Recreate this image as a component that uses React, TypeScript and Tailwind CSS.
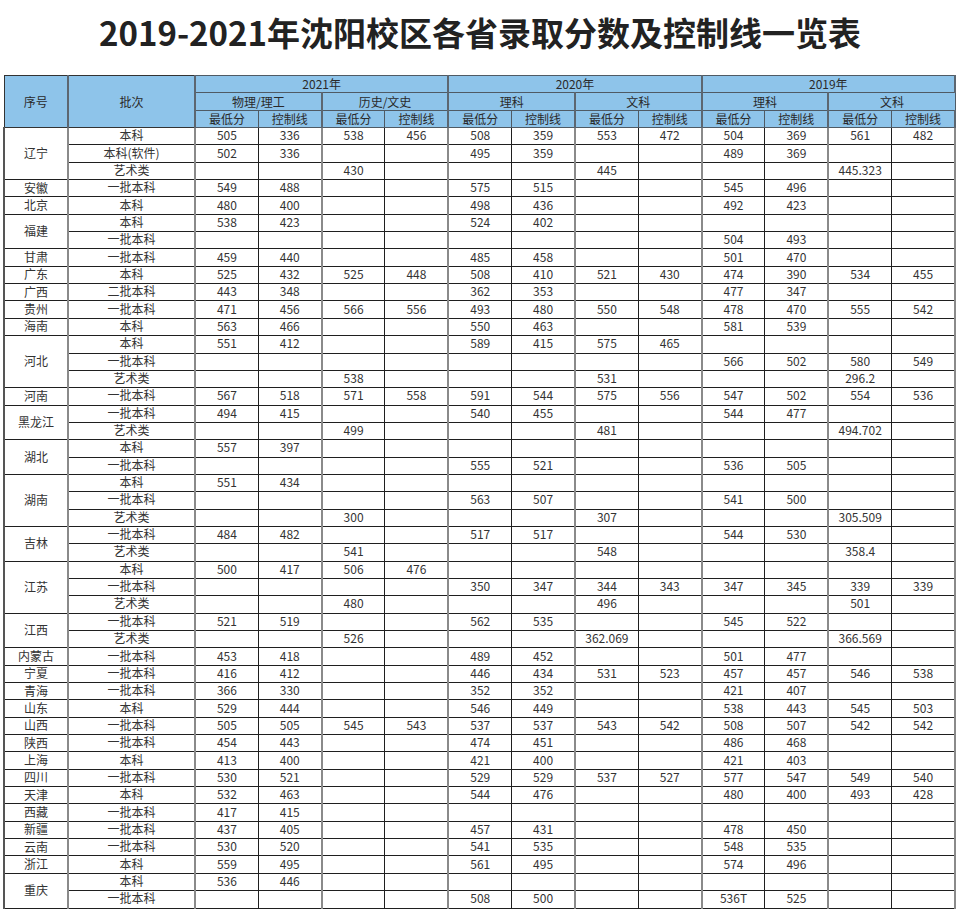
type Row = { batch: string; vals: string };
type Group = { prov: string; rows: Row[] };

const groups: Group[] = [
  {
    prov: "辽宁",
    rows: [
      { batch: "本科", vals: "505 336 538 456 508 359 553 472 504 369 561 482" },
      { batch: "本科(软件)", vals: "502 336 _ _ 495 359 _ _ 489 369 _ _" },
      { batch: "艺术类", vals: "_ _ 430 _ _ _ 445 _ _ _ 445.323 _" },
    ],
  },
  { prov: "安徽", rows: [{ batch: "一批本科", vals: "549 488 _ _ 575 515 _ _ 545 496 _ _" }] },
  { prov: "北京", rows: [{ batch: "本科", vals: "480 400 _ _ 498 436 _ _ 492 423 _ _" }] },
  {
    prov: "福建",
    rows: [
      { batch: "本科", vals: "538 423 _ _ 524 402 _ _ _ _ _ _" },
      { batch: "一批本科", vals: "_ _ _ _ _ _ _ _ 504 493 _ _" },
    ],
  },
  { prov: "甘肃", rows: [{ batch: "一批本科", vals: "459 440 _ _ 485 458 _ _ 501 470 _ _" }] },
  { prov: "广东", rows: [{ batch: "本科", vals: "525 432 525 448 508 410 521 430 474 390 534 455" }] },
  { prov: "广西", rows: [{ batch: "二批本科", vals: "443 348 _ _ 362 353 _ _ 477 347 _ _" }] },
  { prov: "贵州", rows: [{ batch: "一批本科", vals: "471 456 566 556 493 480 550 548 478 470 555 542" }] },
  { prov: "海南", rows: [{ batch: "本科", vals: "563 466 _ _ 550 463 _ _ 581 539 _ _" }] },
  {
    prov: "河北",
    rows: [
      { batch: "本科", vals: "551 412 _ _ 589 415 575 465 _ _ _ _" },
      { batch: "一批本科", vals: "_ _ _ _ _ _ _ _ 566 502 580 549" },
      { batch: "艺术类", vals: "_ _ 538 _ _ _ 531 _ _ _ 296.2 _" },
    ],
  },
  { prov: "河南", rows: [{ batch: "一批本科", vals: "567 518 571 558 591 544 575 556 547 502 554 536" }] },
  {
    prov: "黑龙江",
    rows: [
      { batch: "一批本科", vals: "494 415 _ _ 540 455 _ _ 544 477 _ _" },
      { batch: "艺术类", vals: "_ _ 499 _ _ _ 481 _ _ _ 494.702 _" },
    ],
  },
  {
    prov: "湖北",
    rows: [
      { batch: "本科", vals: "557 397 _ _ _ _ _ _ _ _ _ _" },
      { batch: "一批本科", vals: "_ _ _ _ 555 521 _ _ 536 505 _ _" },
    ],
  },
  {
    prov: "湖南",
    rows: [
      { batch: "本科", vals: "551 434 _ _ _ _ _ _ _ _ _ _" },
      { batch: "一批本科", vals: "_ _ _ _ 563 507 _ _ 541 500 _ _" },
      { batch: "艺术类", vals: "_ _ 300 _ _ _ 307 _ _ _ 305.509 _" },
    ],
  },
  {
    prov: "吉林",
    rows: [
      { batch: "一批本科", vals: "484 482 _ _ 517 517 _ _ 544 530 _ _" },
      { batch: "艺术类", vals: "_ _ 541 _ _ _ 548 _ _ _ 358.4 _" },
    ],
  },
  {
    prov: "江苏",
    rows: [
      { batch: "本科", vals: "500 417 506 476 _ _ _ _ _ _ _ _" },
      { batch: "一批本科", vals: "_ _ _ _ 350 347 344 343 347 345 339 339" },
      { batch: "艺术类", vals: "_ _ 480 _ _ _ 496 _ _ _ 501 _" },
    ],
  },
  {
    prov: "江西",
    rows: [
      { batch: "一批本科", vals: "521 519 _ _ 562 535 _ _ 545 522 _ _" },
      { batch: "艺术类", vals: "_ _ 526 _ _ _ 362.069 _ _ _ 366.569 _" },
    ],
  },
  { prov: "内蒙古", rows: [{ batch: "一批本科", vals: "453 418 _ _ 489 452 _ _ 501 477 _ _" }] },
  { prov: "宁夏", rows: [{ batch: "一批本科", vals: "416 412 _ _ 446 434 531 523 457 457 546 538" }] },
  { prov: "青海", rows: [{ batch: "一批本科", vals: "366 330 _ _ 352 352 _ _ 421 407 _ _" }] },
  { prov: "山东", rows: [{ batch: "本科", vals: "529 444 _ _ 546 449 _ _ 538 443 545 503" }] },
  { prov: "山西", rows: [{ batch: "一批本科", vals: "505 505 545 543 537 537 543 542 508 507 542 542" }] },
  { prov: "陕西", rows: [{ batch: "一批本科", vals: "454 443 _ _ 474 451 _ _ 486 468 _ _" }] },
  { prov: "上海", rows: [{ batch: "本科", vals: "413 400 _ _ 421 400 _ _ 421 403 _ _" }] },
  { prov: "四川", rows: [{ batch: "一批本科", vals: "530 521 _ _ 529 529 537 527 577 547 549 540" }] },
  { prov: "天津", rows: [{ batch: "本科", vals: "532 463 _ _ 544 476 _ _ 480 400 493 428" }] },
  { prov: "西藏", rows: [{ batch: "一批本科", vals: "417 415 _ _ _ _ _ _ _ _ _ _" }] },
  { prov: "新疆", rows: [{ batch: "一批本科", vals: "437 405 _ _ 457 431 _ _ 478 450 _ _" }] },
  { prov: "云南", rows: [{ batch: "一批本科", vals: "530 520 _ _ 541 535 _ _ 548 535 _ _" }] },
  { prov: "浙江", rows: [{ batch: "本科", vals: "559 495 _ _ 561 495 _ _ 574 496 _ _" }] },
  {
    prov: "重庆",
    rows: [
      { batch: "本科", vals: "536 446 _ _ _ _ _ _ _ _ _ _" },
      { batch: "一批本科", vals: "_ _ _ _ 508 500 _ _ 536T 525 _ _" },
    ],
  },
];

const years = ["2021年", "2020年", "2019年"];
const subjects = ["物理/理工", "历史/文史", "理科", "文科", "理科", "文科"];

// pairs start on a gray, heavier rule; the second column of a pair on a thin dark one
function dataBorder(i: number) {
  const left = i % 2 === 0 ? "border-l-2 border-l-[#8a8a8a]" : "border-l border-l-[#1f1f1f]";
  const right = i === 11 ? " border-r-2 border-r-[#8a8a8a]" : "";
  return left + right;
}

export default function App() {
  return (
    <div className="min-h-[912px] w-[960px] bg-white font-['Noto_Sans_CJK_SC',sans-serif] text-[#333]">
      <div className="flex h-[75px] items-center justify-center pb-[10px]">
        <h1 className="text-[33px] font-bold leading-none text-[#222]">
          2019-2021年沈阳校区各省录取分数及控制线一览表
        </h1>
      </div>

      <table className="ml-[3px] w-[953px] table-fixed border-collapse text-center text-[12px] leading-none">
        <colgroup>
          <col className="w-[64px]" />
          <col className="w-[127px]" />
          {Array.from({ length: 12 }, (_, i) => (
            <col key={i} />
          ))}
        </colgroup>
        <thead className="bg-[#8ec4ea] text-[#2a2a2a]">
          <tr className="h-[17.35px]">
            <th rowSpan={3} className="border border-[#333] border-r-2 border-r-[#5c6670] font-normal">
              序号
            </th>
            <th rowSpan={3} className="border border-[#333] border-r-2 border-r-[#5c6670] font-normal">
              批次
            </th>
            {years.map((y) => (
              <th key={y} colSpan={4} className="border border-[#4f5a64] border-r-2 border-r-[#5c6670] font-normal">
                {y}
              </th>
            ))}
          </tr>
          <tr className="h-[17.35px]">
            {subjects.map((s, i) => (
              <th key={i} colSpan={2} className="border border-[#4f5a64] border-l-2 border-l-[#5c6670] font-normal">
                {s}
              </th>
            ))}
          </tr>
          <tr className="h-[17.35px]">
            {Array.from({ length: 12 }, (_, i) => (
              <th
                key={i}
                className={`border-y border-[#4f5a64] font-normal ${i % 2 === 0 ? "border-l-2 border-l-[#5c6670]" : "border-l border-l-[#4f5a64]"} ${i === 11 ? "border-r-2 border-r-[#5c6670]" : ""}`}
              >
                {i % 2 === 0 ? "最低分" : "控制线"}
              </th>
            ))}
          </tr>
        </thead>
        <tbody>
          {groups.map((g) =>
            g.rows.map((r, ri) => (
              <tr key={g.prov + ri} className="h-[17.35px]">
                {ri === 0 && (
                  <td
                    rowSpan={g.rows.length}
                    className="border-y border-l-2 border-r-2 border-[#1f1f1f] border-l-[#555] border-r-[#8a8a8a] pb-[1px]"
                  >
                    {g.prov}
                  </td>
                )}
                <td className="border-y border-r-2 border-[#1f1f1f] border-r-[#8a8a8a] pb-[2px]">{r.batch}</td>
                {r.vals.split(" ").map((v, i) => (
                  <td key={i} className={`border-y border-y-[#1f1f1f] pb-[2px] ${dataBorder(i)}`}>
                    {v === "_" ? "" : v}
                  </td>
                ))}
              </tr>
            )),
          )}
        </tbody>
      </table>
    </div>
  );
}
